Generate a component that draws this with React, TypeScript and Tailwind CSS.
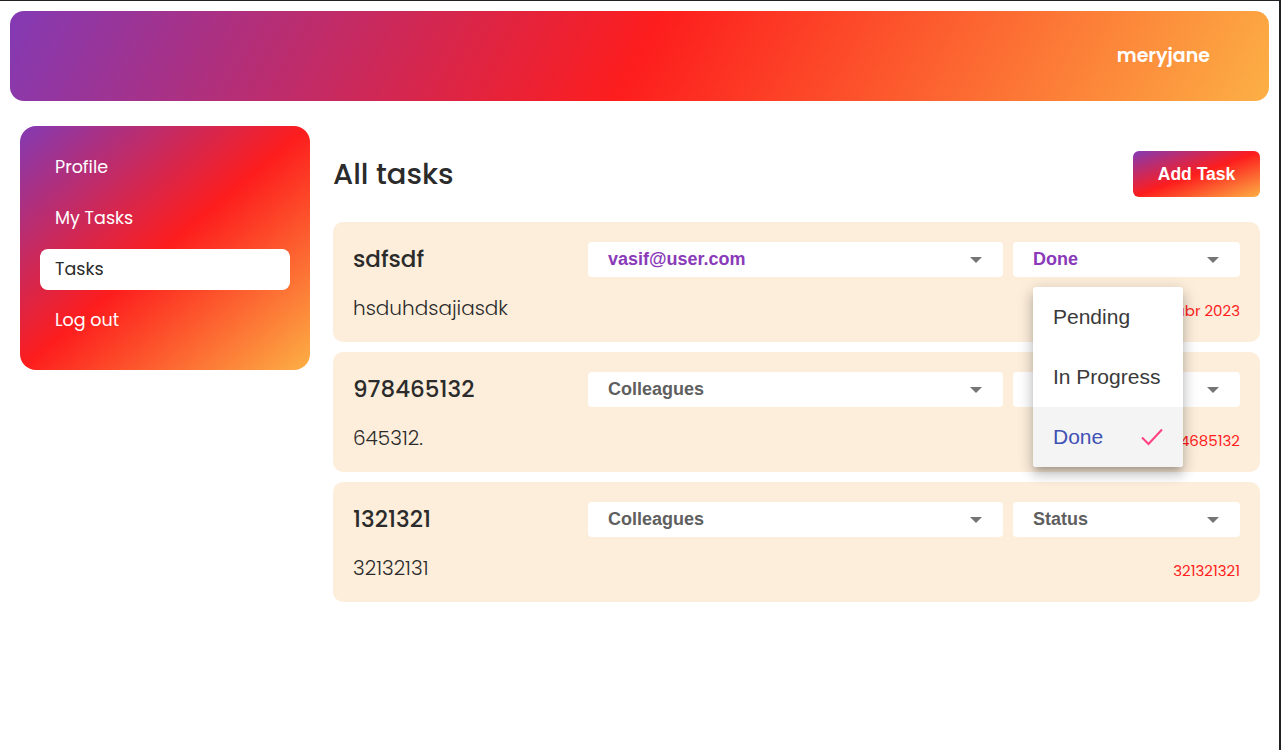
import React from "react";

type Task = {
  id: number;
  title: string;
  desc: string;
  assignee: string;
  status: string;
  date: string;
  open?: boolean;
};

const tasks: Task[] = [
  { id: 1, title: "sdfsdf", desc: "hsduhdsajiasdk", assignee: "vasif@user.com", status: "Done", date: "12 abr 2023", open: true },
  { id: 2, title: "978465132", desc: "645312.", assignee: "Colleagues", status: "Status", date: "654685132" },
  { id: 3, title: "1321321", desc: "32132131", assignee: "Colleagues", status: "Status", date: "321321321" },
];

const poppins = { fontFamily: 'Poppins, "Open Sans", "Noto Sans", sans-serif' };
const arial = { fontFamily: '"Liberation Sans", Arial, sans-serif' };

function Caret() {
  return (
    <svg width="12" height="6" viewBox="0 0 12 6" className="shrink-0">
      <path d="M0 0h12L6 6z" fill="#757575" />
    </svg>
  );
}

function Select({ value, active }: { value: string; active: boolean }) {
  return (
    <div
      className="h-[35px] w-full bg-white rounded-[4px] flex items-center justify-between pl-[20px] pr-[21px]"
      style={arial}
    >
      <span
        className={[
          "text-[18px] font-bold",
          active ? "text-[#8a3ab9]" : "text-[#5f5f5f]",
        ].join(" ")}
      >
        {value}
      </span>
      <Caret />
    </div>
  );
}

function StatusMenu() {
  return (
    <div
      className="absolute left-[20px] top-[45px] z-10 w-[150px] bg-white rounded-[3px] shadow-[0_5px_6px_-3px_rgba(0,0,0,0.2),0_8px_12px_1px_rgba(0,0,0,0.14),0_3px_16px_2px_rgba(0,0,0,0.12)] overflow-hidden"
      style={arial}
    >
      <div className="h-[60px] flex items-center px-[20px] text-[21px] text-[#3a3a3a]">Pending</div>
      <div className="h-[60px] flex items-center px-[20px] text-[21px] text-[#3a3a3a]">In Progress</div>
      <div className="h-[60px] flex items-center justify-between pl-[20px] pr-[20px] text-[21px] text-[#3f51b5] bg-[#f4f4f4]">
        <span>Done</span>
        <svg width="22" height="18" viewBox="0 0 22 18">
          <path d="M1 9.5l6.5 6.5L21 1.5" fill="none" stroke="#ff4081" strokeWidth="2" />
        </svg>
      </div>
    </div>
  );
}

function TaskCard({ t }: { t: Task }) {
  return (
    <div className="bg-[#fdeedb] rounded-[10px] px-[20px] pt-[20px] pb-[20px]">
      <div className="flex items-center">
        <div className="w-[235px] shrink-0 text-[23px] font-medium text-[#2b2b2b]" style={poppins}>
          {t.title}
        </div>
        <div className="flex-1">
          <Select value={t.assignee} active={t.assignee.includes("@")} />
        </div>
        <div className="w-[227px] ml-[10px] relative">
          <Select value={t.status} active={t.status !== "Status"} />
          {t.open ? <StatusMenu /> : null}
        </div>
      </div>
      <div className="mt-[17px] h-[28px] flex items-center justify-between">
        <span className="text-[20px] font-light text-[#2b2b2b]" style={poppins}>
          {t.desc}
        </span>
        <span className="text-[15px] text-[#ff1d1d] mt-[6px]" style={poppins}>
          {t.date}
        </span>
      </div>
    </div>
  );
}

export default function App() {
  const menu = ["Profile", "My Tasks", "Tasks", "Log out"];
  return (
    <div className="min-h-[750px] bg-white border-t border-t-[#202124] border-r-2 border-r-[#202124]">
      <div className="px-[10px] pt-[10px]">
        <header className="h-[90px] rounded-[14px] bg-[linear-gradient(118deg,#833ab4,#fd1d1d,#fcb045)] flex items-center justify-end pr-[59px]">
          <span className="text-white text-[19px] font-semibold" style={poppins}>
            meryjane
          </span>
        </header>

        <div className="flex pt-[25px] pl-[10px] pr-[9px]">
          <aside className="w-[290px] shrink-0 self-start rounded-[16px] bg-[linear-gradient(to_bottom_right,#833ab4,#fd1d1d,#fcb045)] px-[20px] pt-[21px] pb-[29px] flex flex-col gap-[10px]">
            {menu.map((m) => (
              <div
                key={m}
                className={[
                  "h-[41px] rounded-[8px] px-[15px] flex items-center text-[17.5px]",
                  m === "Tasks" ? "bg-white text-[#2b2b2b]" : "text-white",
                ].join(" ")}
                style={poppins}
              >
                {m}
              </div>
            ))}
          </aside>

          <main className="flex-1 ml-[23px] pt-[25px]">
            <div className="flex items-center justify-between">
              <h1 className="text-[29px] font-medium text-[#2b2b2b] mt-[1px]" style={poppins}>
                All tasks
              </h1>
              <button
                type="button"
                className="h-[46px] w-[127px] rounded-[6px] bg-[linear-gradient(to_bottom_right,#833ab4,#fd1d1d,#fcb045)] text-white text-[17.5px] font-bold"
                style={arial}
              >
                Add Task
              </button>
            </div>

            <div className="mt-[25px] flex flex-col gap-[10px]">
              {tasks.map((t) => (
                <TaskCard key={t.id} t={t} />
              ))}
            </div>
          </main>
        </div>
      </div>
    </div>
  );
}
